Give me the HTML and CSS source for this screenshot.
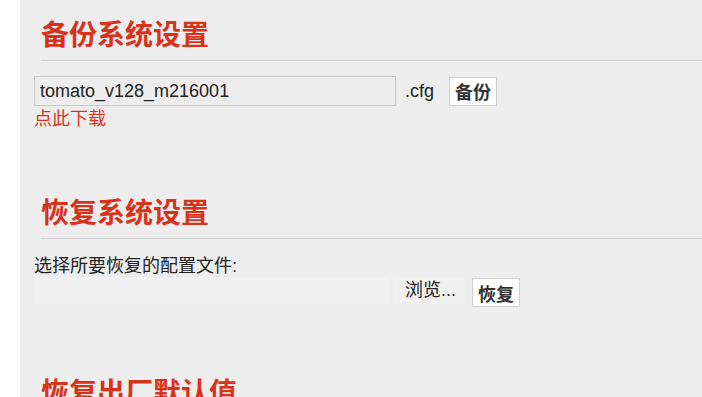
FILE: index.html
```html
<!DOCTYPE html>
<html lang="zh-CN">
<head>
  <meta charset="UTF-8" />
  <title>备份与恢复</title>
  <link rel="stylesheet" href="styles.css">
</head>
<body>
  <div id="main">
    <div class="section">
      <h2>备份系统设置</h2>
      <div class="row">
        <input type="text" class="name" value="tomato_v128_m216001">
        <span class="ext">.cfg</span>
        <button class="btn">备份</button>
      </div>
      <a class="download" href="#">点此下载</a>
    </div>

    <div class="section tall">
      <h2>恢复系统设置</h2>
      <div class="label">选择所要恢复的配置文件:</div>
      <div class="row restore">
        <div class="file"></div>
        <span class="browse">浏览...</span>
        <button class="btn">恢复</button>
      </div>
    </div>

    <div class="section">
      <h2>恢复出厂默认值</h2>
    </div>
  </div>
</body>
</html>
```

FILE: styles.css
```css
* { box-sizing: border-box; }
html, body { height: 100%; overflow: hidden; }
body { margin: 0; background: #fff; font-family: "Liberation Sans", "Noto Sans CJK SC", sans-serif; color: #222; }
#main { margin-left: 20px; background: #ededed; min-height: 100%; padding: 0 0 0 14px; }

.section { height: 178px; }
.section.tall { height: 180px; }
h2 { margin: 0 0 0 7px; padding: 17px 0 6px; font-size: 28px; line-height: 37px; color: #d9321b; font-weight: bold; border-bottom: 1px solid #cfcfcf; }

.row { display: flex; align-items: center; margin-top: 15px; font-size: 18px; }
.name { width: 362px; height: 30px; border: 1px solid #c8c8c8; background: #ededed; padding: 0 5px; font: 18px "Liberation Sans", sans-serif; color: #222; }
.ext { margin-left: 9px; }
.btn { margin-left: 15px; height: 29px; padding: 0 5px; background: #fff; border: 1px solid #cfcfcf; font: bold 18px "Liberation Sans", "Noto Sans CJK SC", sans-serif; color: #333; }
.download { display: block; margin-top: 2px; color: #d9321b; text-decoration: none; font-size: 18px; line-height: 22px; }

.label { margin-top: 16px; font-size: 18px; line-height: 22px; }
.restore { margin-top: 0; align-items: flex-start; }
.file { width: 356px; height: 27px; background: #f0f0f0; }
.browse { margin-left: 3px; padding: 0 9px 0 12px; height: 27px; line-height: 27px; background: #f0f0f0; }
.restore .btn { margin-left: 7px; margin-top: 1px; }
```
